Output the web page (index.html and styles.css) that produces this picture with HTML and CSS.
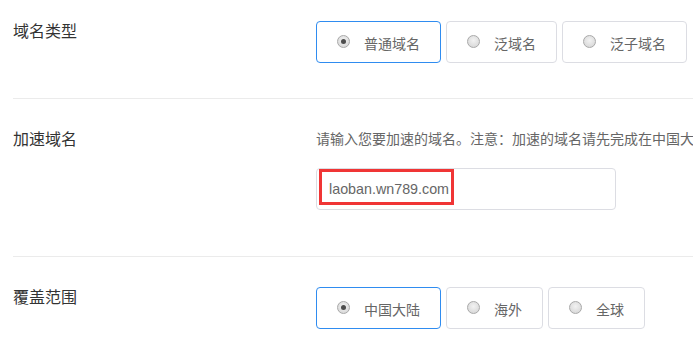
FILE: index.html
```html
<!DOCTYPE html>
<html lang="zh-CN">
<head>
<meta charset="utf-8">
<title>域名设置</title>
<link rel="stylesheet" href="styles.css">
</head>
<body>
<div class="form">
  <div class="row row-first">
    <div class="label">域名类型</div>
    <div class="field">
      <div class="options">
        <div class="opt opt-on"><span class="radio radio-on"></span><span>普通域名</span></div>
        <div class="opt"><span class="radio"></span><span>泛域名</span></div>
        <div class="opt"><span class="radio"></span><span>泛子域名</span></div>
      </div>
    </div>
  </div>
  <div class="row row-domain">
    <div class="label">加速域名</div>
    <div class="field">
      <div class="desc">请输入您要加速的域名。注意：加速的域名请先完成在中国大</div>
      <div class="input-wrap">
        <div class="input">laoban.wn789.com</div>
        <div class="mark"></div>
      </div>
    </div>
  </div>
  <div class="row row-last">
    <div class="label">覆盖范围</div>
    <div class="field">
      <div class="options">
        <div class="opt opt-on"><span class="radio radio-on"></span><span>中国大陆</span></div>
        <div class="opt"><span class="radio"></span><span>海外</span></div>
        <div class="opt"><span class="radio"></span><span>全球</span></div>
      </div>
    </div>
  </div>
</div>
</body>
</html>
```

FILE: styles.css
```css
html, body {
  margin: 0;
  padding: 0;
  background: #fff;
  overflow: hidden;
}
body {
  font-family: "Liberation Sans", "Noto Sans CJK SC", sans-serif;
  color: #333;
}
.form {
  padding-left: 13px;
}
.row {
  display: grid;
  grid-template-columns: 303px 1fr;
  border-bottom: 1px solid #ebebeb;
  padding-top: 30px;
  padding-bottom: 35px;
}
.row-first {
  padding-top: 21px;
}
.row-domain {
  padding-bottom: 46px;
}
.row-last {
  border-bottom: none;
  padding-bottom: 6px;
}
.label {
  font-size: 16px;
  line-height: 20px;
  padding-top: 1px;
  color: #333;
  white-space: nowrap;
}
.field {
  min-width: 0;
  white-space: nowrap;
}
.options {
  display: flex;
  gap: 5px;
}
.opt {
  box-sizing: border-box;
  height: 42px;
  display: inline-flex;
  align-items: center;
  gap: 14px;
  padding: 0 20px;
  border: 1px solid #dcdde3;
  border-radius: 4px;
  font-size: 14px;
  color: #666;
  background: #fff;
}
.opt span:last-child {
  position: relative;
  top: 1px;
}
.opt-on {
  border-color: #2f8cf0;
}
.radio {
  box-sizing: border-box;
  width: 13px;
  height: 13px;
  border-radius: 50%;
  border: 1px solid #a9a9a9;
  background: radial-gradient(circle at 50% 40%, #f2f2f2 0%, #dcdcdc 70%, #cfcfcf 100%);
  display: inline-flex;
  align-items: center;
  justify-content: center;
  margin-top: -2px;
}
.radio-on::after {
  content: "";
  width: 5px;
  height: 5px;
  border-radius: 50%;
  background: #4d4d4d;
}
.desc {
  font-size: 14px;
  line-height: 20px;
  color: #666;
  overflow: hidden;
}
.input-wrap {
  position: relative;
  width: 300px;
  margin-top: 19px;
}
.input {
  box-sizing: border-box;
  height: 42px;
  border: 1px solid #dcdde3;
  border-radius: 4px;
  padding-left: 12px;
  font-size: 14.3px;
  line-height: 40px;
  color: #666;
}
.mark {
  position: absolute;
  left: 3px;
  top: 1px;
  width: 135px;
  height: 36px;
  box-sizing: border-box;
  border: 3px solid #f03535;
}
```
